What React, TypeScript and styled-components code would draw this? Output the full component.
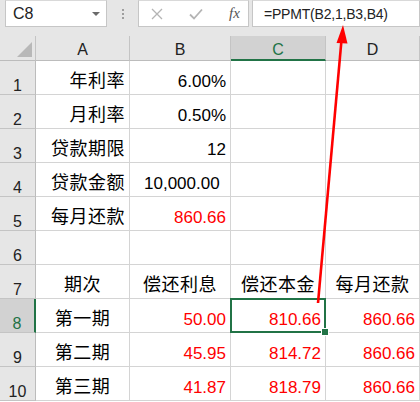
import styled, { createGlobalStyle, css } from 'styled-components';

const GREEN = '#217346';
const GRID = '#d4d4d4';

const GlobalStyle = createGlobalStyle`
  body {
    margin: 0;
    background: #ffffff;
    font-family: 'Liberation Sans', 'Noto Sans CJK SC', sans-serif;
  }
`;

type Align = 'left' | 'center' | 'right';

type CellData = { text?: string; align?: Align; red?: boolean; active?: boolean };

const rows: CellData[][] = [
  [{ text: '年利率', align: 'right' }, { text: '6.00%', align: 'right' }, {}, {}],
  [{ text: '月利率', align: 'right' }, { text: '0.50%', align: 'right' }, {}, {}],
  [{ text: '贷款期限', align: 'right' }, { text: '12', align: 'right' }, {}, {}],
  [{ text: '贷款金额', align: 'right' }, { text: '10,000.00', align: 'left' }, {}, {}],
  [{ text: '每月还款', align: 'right' }, { text: '860.66', align: 'right', red: true }, {}, {}],
  [{}, {}, {}, {}],
  [
    { text: '期次', align: 'center' },
    { text: '偿还利息', align: 'center' },
    { text: '偿还本金', align: 'center' },
    { text: '每月还款', align: 'center' },
  ],
  [
    { text: '第一期', align: 'center' },
    { text: '50.00', align: 'right', red: true },
    { text: '810.66', align: 'right', red: true, active: true },
    { text: '860.66', align: 'right', red: true },
  ],
  [
    { text: '第二期', align: 'center' },
    { text: '45.95', align: 'right', red: true },
    { text: '814.72', align: 'right', red: true },
    { text: '860.66', align: 'right', red: true },
  ],
  [
    { text: '第三期', align: 'center' },
    { text: '41.87', align: 'right', red: true },
    { text: '818.79', align: 'right', red: true },
    { text: '860.66', align: 'right', red: true },
  ],
];

const columns = ['A', 'B', 'C', 'D'];
const activeCol = 'C';
const activeRow = 8;

const isCjk = (s?: string) => !!s && /[\u4e00-\u9fff]/.test(s);

export default function App() {
  return (
    <Page>
      <GlobalStyle />
      <FormulaBar>
        <NameBox>
          <span>C8</span>
          <DropTriangle />
        </NameBox>
        <Grip>
          <i />
          <i />
          <i />
        </Grip>
        <ActionBox>
          <ActionIcon>
            <svg width="12" height="12" viewBox="0 0 12 12">
              <path d="M1 1 L11 11 M11 1 L1 11" stroke="#b4b4b4" strokeWidth="1.3" fill="none" />
            </svg>
          </ActionIcon>
          <ActionIcon>
            <svg width="14" height="12" viewBox="0 0 14 12">
              <path d="M1 6.5 L5 10.5 L13 1.5" stroke="#b4b4b4" strokeWidth="1.8" fill="none" />
            </svg>
          </ActionIcon>
          <FxLabel>fx</FxLabel>
        </ActionBox>
        <FormulaInput>=PPMT(B2,1,B3,B4)</FormulaInput>
      </FormulaBar>

      <Sheet>
        <Corner>
          <CornerTriangle />
        </Corner>
        {columns.map((c) => (
          <ColHead key={c} $active={c === activeCol}>
            {c}
          </ColHead>
        ))}
        {rows.map((row, ri) => (
          <RowGroup key={ri}>
            <RowHead $active={ri + 1 === activeRow}>{ri + 1}</RowHead>
            {row.map((cell, ci) => (
              <Cell
                key={ci}
                $align={cell.align || 'left'}
                $red={cell.red}
                $active={cell.active}
                $cjk={isCjk(cell.text)}
              >
                {cell.text}
              </Cell>
            ))}
          </RowGroup>
        ))}
      </Sheet>

      <ArrowOverlay width="420" height="402" viewBox="0 0 420 402">
        <line x1="318" y1="303" x2="341.5" y2="40" stroke="#ff0000" strokeWidth="2.6" />
        <polygon points="343,25 336.5,43 347.5,43.5" fill="#ff0000" />
      </ArrowOverlay>
    </Page>
  );
}

const Page = styled.div`
  position: relative;
  width: 420px;
  height: 402px;
  overflow: hidden;
  background: #ffffff;
`;

const FormulaBar = styled.div`
  height: 36px;
  box-sizing: border-box;
  background: #e6e6e6;
  display: flex;
  align-items: flex-start;
  padding-left: 5px;
`;

const boxStyle = css`
  height: 27px;
  box-sizing: border-box;
  background: #ffffff;
  border: 1px solid #c6c6c6;
  border-top-color: #d9d9d9;
  display: flex;
  align-items: center;
`;

const NameBox = styled.div`
  ${boxStyle};
  width: 102px;
  padding: 0 6px 0 7px;
  justify-content: space-between;
  font-size: 16px;
  color: #222222;
`;

const DropTriangle = styled.span`
  width: 0;
  height: 0;
  border-left: 4px solid transparent;
  border-right: 4px solid transparent;
  border-top: 4px solid #6a6a6a;
  margin-top: 1px;
`;

const Grip = styled.div`
  width: 31px;
  height: 27px;
  display: flex;
  flex-direction: column;
  align-items: center;
  justify-content: center;
  gap: 2px;

  & > i {
    display: block;
    width: 2px;
    height: 2px;
    background: #9e9e9e;
  }
`;

const ActionBox = styled.div`
  ${boxStyle};
  width: 111px;
  padding-left: 12px;
`;

const ActionIcon = styled.span`
  width: 38px;
  display: flex;
  align-items: center;
`;

const FxLabel = styled.span`
  font-family: 'Liberation Serif', serif;
  font-style: italic;
  font-size: 15px;
  color: #555555;
  margin-left: 2px;
`;

const FormulaInput = styled.div`
  ${boxStyle};
  flex: 1;
  margin-left: 3px;
  padding-left: 11px;
  font-size: 14px;
  letter-spacing: -0.2px;
  color: #222222;
`;

const Sheet = styled.div`
  display: grid;
  grid-template-columns: 36px 94px 101px 95px 94px;
  grid-template-rows: 25px repeat(10, 34px);
`;

const RowGroup = styled.div`
  display: contents;
`;

const headStyle = css`
  box-sizing: border-box;
  background: #e6e6e6;
  color: #222222;
  font-size: 16px;
  line-height: 16px;
  display: flex;
  justify-content: center;
  align-items: flex-end;
`;

const Corner = styled.div`
  ${headStyle};
  position: relative;
  border-right: 1px solid #c4c4c4;
  border-bottom: 1px solid #bcbcbc;
`;

const CornerTriangle = styled.span`
  position: absolute;
  right: 3px;
  bottom: 3px;
  width: 0;
  height: 0;
  border-left: 15px solid transparent;
  border-bottom: 15px solid #b8b8b8;
`;

const ColHead = styled.div<{ $active?: boolean }>`
  ${headStyle};
  padding-bottom: 2px;
  border-right: 1px solid #c4c4c4;
  border-bottom: 1px solid #bcbcbc;
  ${(p) =>
    p.$active &&
    css`
      background: #d2d2d2;
      color: ${GREEN};
      border-bottom: 2px solid ${GREEN};
      padding-bottom: 1px;
    `}
`;

const RowHead = styled.div<{ $active?: boolean }>`
  ${headStyle};
  padding-bottom: 0;
  border-right: 1px solid #bcbcbc;
  border-bottom: 1px solid #c4c4c4;
  ${(p) =>
    p.$active &&
    css`
      background: #d2d2d2;
      color: ${GREEN};
      border-right: 2px solid ${GREEN};
    `}
`;

const Cell = styled.div<{ $align: Align; $red?: boolean; $active?: boolean; $cjk?: boolean }>`
  position: relative;
  box-sizing: border-box;
  border-right: 1px solid ${GRID};
  border-bottom: 1px solid ${GRID};
  display: flex;
  align-items: flex-end;
  justify-content: ${(p) =>
    p.$align === 'right' ? 'flex-end' : p.$align === 'center' ? 'center' : 'flex-start'};
  padding: 0 4px 4px;
  padding-left: ${(p) => (p.$align === 'left' ? '14px' : '4px')};
  font-size: ${(p) => (p.$cjk ? '18px' : '17px')};
  line-height: ${(p) => (p.$cjk ? '18px' : '17px')};
  letter-spacing: ${(p) => (p.$cjk ? '0.5px' : '0')};
  color: ${(p) => (p.$red ? '#ff0000' : '#000000')};
  white-space: nowrap;

  ${(p) =>
    p.$active &&
    css`
      &::after {
        content: '';
        position: absolute;
        left: -1px;
        top: -1px;
        right: -1px;
        bottom: -1px;
        border: 2px solid ${GREEN};
      }
      &::before {
        content: '';
        position: absolute;
        right: -4px;
        bottom: -4px;
        width: 6px;
        height: 6px;
        background: ${GREEN};
        border: 1px solid #ffffff;
        z-index: 1;
      }
    `}
`;

const ArrowOverlay = styled.svg`
  position: absolute;
  left: 0;
  top: 0;
  pointer-events: none;
`;
